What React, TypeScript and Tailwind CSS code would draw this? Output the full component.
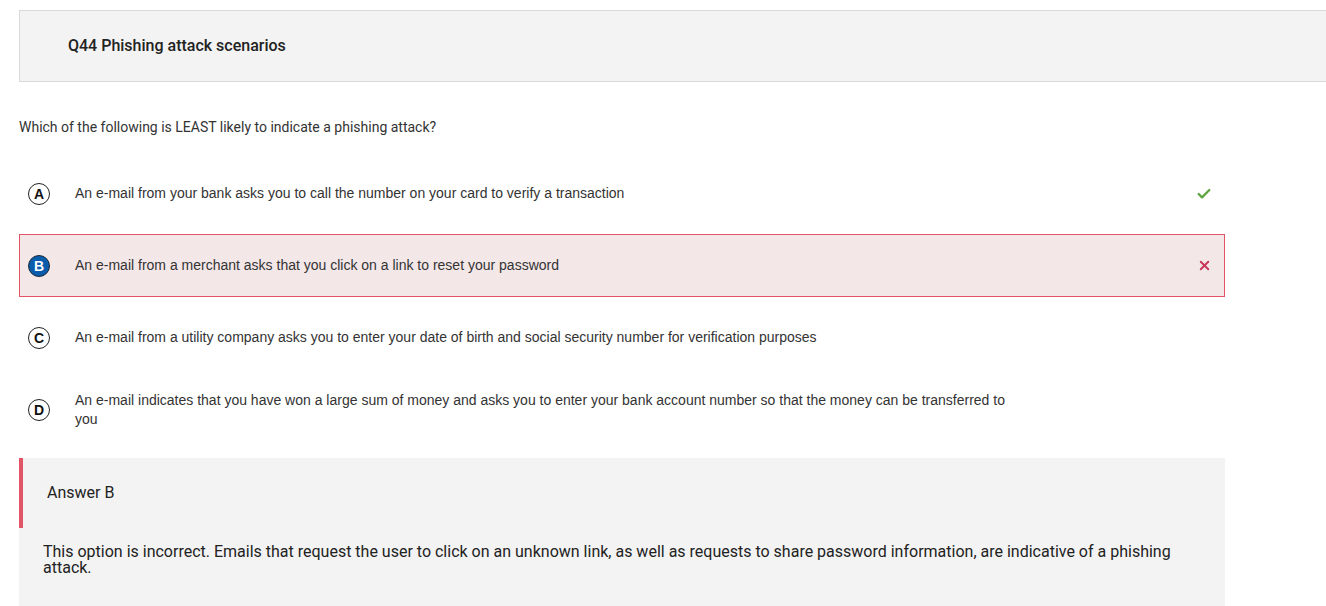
import { Check, X } from "lucide-react";

interface OptionProps {
  letter: string;
  text: string;
  state?: "correct" | "wrong";
}

function Option({ letter, text, state }: OptionProps) {
  const wrong = state === "wrong";
  return (
    <div
      className={
        wrong
          ? "flex items-center min-h-[63px] border border-[#e25566] bg-[#f3e7e8]"
          : "flex items-center min-h-[63px] border border-transparent"
      }
    >
      <div className="w-[55px] flex shrink-0 pl-[8px]">
        <span
          className={
            wrong
              ? "size-[22px] rounded-full border-[1.5px] border-[#1b2a3a] bg-[#0b5cab] text-white flex items-center justify-center text-[14px] font-bold leading-none"
              : "size-[22px] rounded-full border-[1.5px] border-[#222] bg-white text-[#111] flex items-center justify-center text-[14px] font-bold leading-none"
          }
        >
          {letter}
        </span>
      </div>
      <p className="flex-1 text-[14px] leading-[19px] text-[#333] max-w-[945px]">{text}</p>
      <div className="ml-auto w-[40px] flex justify-center">
        {state === "correct" && <Check className="size-[16px] text-[#5ea540]" strokeWidth={3.5} />}
        {wrong && <X className="size-[15px] text-[#c8355a]" strokeWidth={3} />}
      </div>
    </div>
  );
}

export default function App() {
  return (
    <div className="min-h-screen bg-white pt-[10px] pl-[19px] font-['Roboto',sans-serif]">
      <div className="h-[72px] bg-[#f3f3f3] border border-[#d9d9d9] border-r-0 flex items-center pl-[48px]">
        <h1 className="text-[16px] font-medium text-[#222]">Q44 Phishing attack scenarios</h1>
      </div>

      <p className="mt-[35px] text-[14px] text-[#333]">
        Which of the following is LEAST likely to indicate a phishing attack?
      </p>

      <div className="w-[1206px] mt-[24px] flex flex-col gap-[9px] font-['Liberation_Sans',Arial,sans-serif]">
        <Option
          letter="A"
          state="correct"
          text="An e-mail from your bank asks you to call the number on your card to verify a transaction"
        />
        <Option
          letter="B"
          state="wrong"
          text="An e-mail from a merchant asks that you click on a link to reset your password"
        />
        <Option
          letter="C"
          text="An e-mail from a utility company asks you to enter your date of birth and social security number for verification purposes"
        />
        <Option
          letter="D"
          text="An e-mail indicates that you have won a large sum of money and asks you to enter your bank account number so that the money can be transferred to you"
        />
      </div>

      <div className="w-[1206px] mt-[17px] bg-[#f3f3f3] pb-[32px]">
        <div className="h-[70px] border-l-[4px] border-[#e25566] flex items-center pl-[24px]">
          <span className="text-[16px] text-[#222]">Answer B</span>
        </div>
        <p className="mt-[16px] pl-[24px] pr-[40px] text-[16px] leading-[16px] text-[#222]">
          This option is incorrect. Emails that request the user to click on an unknown link, as well as requests to share password information, are indicative of a phishing attack.
        </p>
      </div>
    </div>
  );
}
